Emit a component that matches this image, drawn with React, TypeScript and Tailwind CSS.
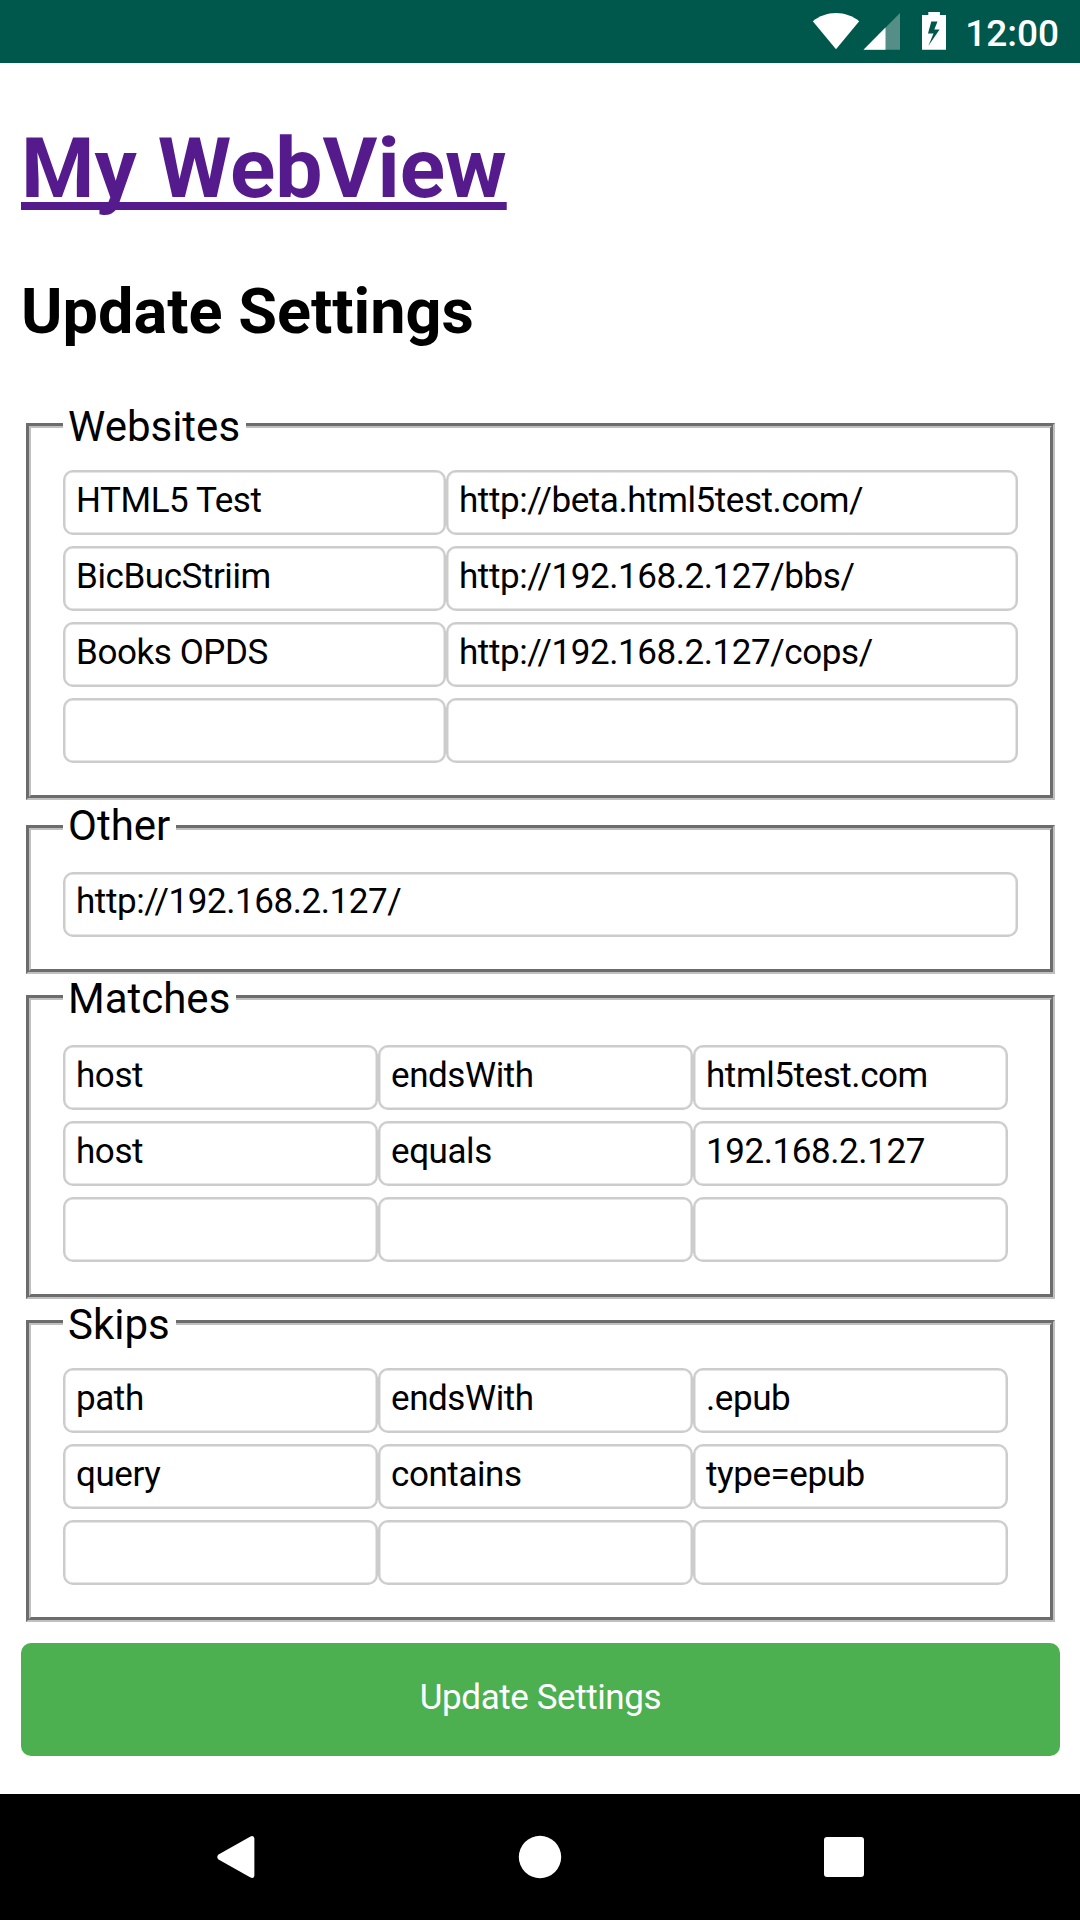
type Group = {
  title: string;
  box: string;
  legend: string;
  body: string;
  columns: string;
  field: string;
  rows: string[][];
};

const groups: Group[] = [
  {
    title: "Websites",
    box: "mt-[52px] h-[399px]",
    legend: "leading-[51px]",
    body: "pt-[20px]",
    columns: "grid-cols-[383px_572px]",
    field: "pt-[8px]",
    rows: [
      ["HTML5 Test", "http://beta.html5test.com/"],
      ["BicBucStriim", "http://192.168.2.127/bbs/"],
      ["Books OPDS", "http://192.168.2.127/cops/"],
      ["", ""],
    ],
  },
  {
    title: "Other",
    box: "mt-[3px] h-[171px]",
    legend: "leading-[45px]",
    body: "pt-[20px]",
    columns: "grid-cols-[955px]",
    field: "pt-[7px]",
    rows: [["http://192.168.2.127/"]],
  },
  {
    title: "Matches",
    box: "-mt-px h-[326px]",
    legend: "leading-[51px]",
    body: "pt-[23px]",
    columns: "grid-cols-[315px_315px_315px]",
    field: "pt-[8px]",
    rows: [
      ["host", "endsWith", "html5test.com"],
      ["host", "equals", "192.168.2.127"],
      ["", "", ""],
    ],
  },
  {
    title: "Skips",
    box: "-mt-px h-[324px]",
    legend: "leading-[53px]",
    body: "pt-[21px]",
    columns: "grid-cols-[315px_315px_315px]",
    field: "pt-[8px]",
    rows: [
      ["path", "endsWith", ".epub"],
      ["query", "contains", "type=epub"],
      ["", "", ""],
    ],
  },
];

function StatusBar() {
  return (
    <header className="flex h-[63px] shrink-0 items-start justify-end bg-[#00574b] pr-[21px] text-white">
      <svg className="mt-[12px] h-[38px] w-[48px]" viewBox="0 0 48 38" fill="currentColor">
        <path d="M0.8 9.2C7.5 4 15.2 1 24 1s16.500 3 23.200 8.200L24 37.300z" />
      </svg>
      <svg className="mt-[12px] ml-[3px] h-[38px] w-[38px]" viewBox="0 0 38 38" fill="currentColor">
        <path d="M37 1v36.700H0.500z" opacity="0.33" />
        <path d="M22.500 15.500v22.200H0.500z" />
      </svg>
      <svg className="mt-[12px] ml-[20px] h-[38px] w-[26px]" viewBox="0 0 26 38" fill="currentColor">
        <path
          fillRule="evenodd"
          d="M7.300 0h11.600v3H25v34.700H1V3h6.300zM10.300 9.500L7 21.500h5.500L7.300 34 18.600 17.500h-5.300L16.500 9.500z"
        />
      </svg>
      <span className="ml-[18px] text-[37px] leading-[68px] font-medium">12:00</span>
    </header>
  );
}

function Field({ value, className }: { value: string; className: string }) {
  return (
    <div
      className={`h-[65px] rounded-[10px] border-2 border-[#ccc] bg-white pl-[11px] text-[35px] leading-[41px] tracking-[-0.42px] whitespace-nowrap shadow-[inset_0_0_0_0.500px_#ccc] ${className}`}
    >
      {value}
    </div>
  );
}

function SettingsGroup({ group }: { group: Group }) {
  return (
    <fieldset className={`ml-[5px] w-[1029px] border-[5px] border-[#c0c0c0] pl-[32px] [border-style:groove] ${group.box}`}>
      <legend className={`h-[49px] pr-[6px] pl-[5px] text-[42px] ${group.legend}`}>{group.title}</legend>
      <div className={`grid gap-y-[11px] ${group.columns} ${group.body}`}>
        {group.rows.flatMap((row, r) =>
          row.map((value, c) => <Field key={`${r}-${c}`} value={value} className={group.field} />),
        )}
      </div>
    </fieldset>
  );
}

function NavBar() {
  return (
    <nav className="flex h-[126px] shrink-0 items-center bg-black pl-[217px] text-white">
      <svg className="h-[44px] w-[44px]" viewBox="0 0 44 44" fill="currentColor">
        <path d="M1.500 19.500 33.500 1.400Q37 0 37.400 3.500V40.500Q37 44 33.500 42.600L1.500 24.500Q-1 22 1.500 19.500z" />
      </svg>
      <svg className="ml-[257px] h-[44px] w-[44px]" viewBox="0 0 44 44" fill="currentColor">
        <circle cx="22" cy="22" r="21.200" />
      </svg>
      <svg className="ml-[260px] h-[44px] w-[44px]" viewBox="0 0 44 44" fill="currentColor">
        <rect x="2" y="2" width="40" height="40" rx="3" />
      </svg>
    </nav>
  );
}

export default function App() {
  return (
    <div className="flex h-[1920px] w-[1080px] flex-col overflow-hidden bg-white font-[Roboto,sans-serif] text-black">
      <StatusBar />
      <main className="flex grow flex-col px-[21px]">
        <h1 className="mt-[57px] text-[84px] leading-[98px] font-bold">
          <a
            href="#"
            className="text-[#551a8b] underline decoration-[8px] underline-offset-[5px] [text-decoration-skip-ink:none]"
          >
            My WebView
          </a>
        </h1>
        <h2 className="mt-[57px] text-[63px] leading-[74px] font-bold">Update Settings</h2>
        {groups.map((group) => (
          <SettingsGroup key={group.title} group={group} />
        ))}
        <button className="mt-[21px] h-[113px] w-[1039px] rounded-[10px] bg-[#4caf50] pb-[5px] text-[35px] leading-[41px] tracking-[-0.42px] text-white">
          Update Settings
        </button>
      </main>
      <NavBar />
    </div>
  );
}
